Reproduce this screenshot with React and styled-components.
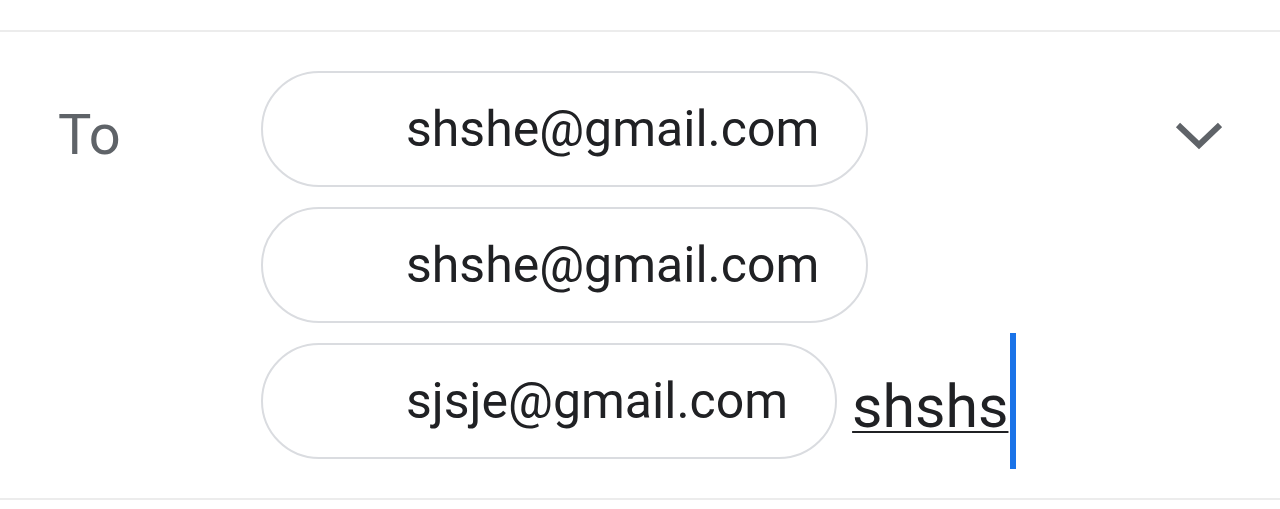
import React from 'react';
import styled, { createGlobalStyle } from 'styled-components';

const GlobalStyle = createGlobalStyle`
  body {
    margin: 0;
    background: #fff;
    font-family: Roboto, "Liberation Sans", sans-serif;
  }
`;

const Page = styled.div`
  padding-top: 30px;
  height: 509px;
  box-sizing: border-box;
`;

const Field = styled.div`
  display: flex;
  align-items: flex-start;
  border-top: 2px solid #ececec;
  border-bottom: 2px solid #ececec;
  padding: 39px 58px 39px 0;
`;

const Label = styled.div`
  flex-shrink: 0;
  width: 261px;
  box-sizing: border-box;
  padding: 6px 0 0 58px;
  height: 116px;
  line-height: 116px;
  font-size: 56px;
  color: #5f6368;
`;

const Chips = styled.div`
  display: flex;
  flex-direction: column;
  align-items: flex-start;
  gap: 20px;
`;

const Row = styled.div`
  display: flex;
  align-items: center;
  height: 116px;
`;

const Chip = styled.div`
  height: 116px;
  box-sizing: border-box;
  border: 2px solid #dadce0;
  border-radius: 58px;
  padding: 0 47px 0 143px;
  line-height: 112px;
  font-size: 50px;
  color: #202124;
  white-space: nowrap;
`;

const Typed = styled.div`
  display: flex;
  align-items: center;
  flex-shrink: 0;
  margin-left: 15px;
  height: 136px;
`;

const TypedText = styled.span`
  font-size: 59px;
  line-height: 1;
  color: #202124;
  padding-top: 10px;
  text-decoration: underline;
  text-decoration-thickness: 2px;
  text-underline-offset: 4px;
`;

const Caret = styled.span`
  width: 6px;
  height: 136px;
  margin-left: 2px;
  background: #1a73e8;
`;

const Toggle = styled.div`
  margin-left: auto;
  padding-top: 50px;
  display: flex;
`;

const recipients = ['shshe@gmail.com', 'shshe@gmail.com'];

const App = () => (
  <Page>
    <GlobalStyle />
    <Field>
      <Label>To</Label>
      <Chips>
        {recipients.map((r, i) => (
          <Chip key={i}>{r}</Chip>
        ))}
        <Row>
          <Chip>sjsje@gmail.com</Chip>
          <Typed>
            <TypedText>shshs</TypedText>
            <Caret />
          </Typed>
        </Row>
      </Chips>
      <Toggle>
        <svg width="48" height="30" viewBox="0 0 48 30">
          <polyline
            points="4,4 25,24 46,4"
            fill="none"
            stroke="#5f6368"
            strokeWidth="6"
          />
        </svg>
      </Toggle>
    </Field>
  </Page>
);

export default App;
